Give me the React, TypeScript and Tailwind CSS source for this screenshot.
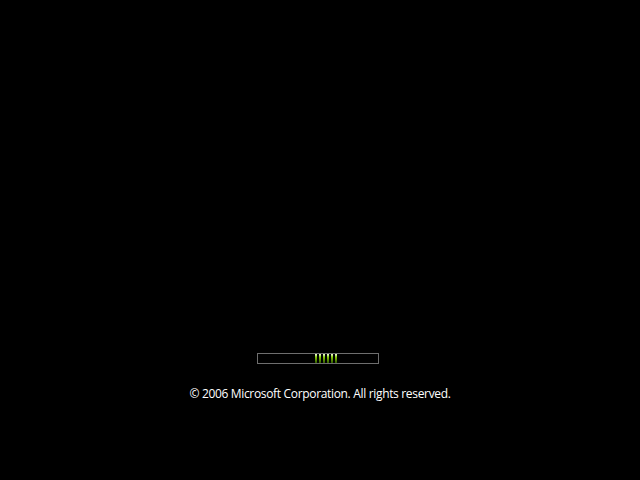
const App = () => {
  const bars = [0, 1, 2, 3, 4, 5];
  return (
    <div className="flex h-[480px] w-[640px] flex-col items-center bg-black pt-[353px] font-['Open_Sans',sans-serif]">
      <div className="ml-[-4px] flex h-[11px] w-[122px] items-start border border-[#6e6e6e] pl-[57px]">
        <div className="flex gap-[2px]">
          {bars.map((b) => (
            <div
              key={b}
              className="h-[9px] w-[2px] bg-gradient-to-b from-[#f4ffd0] via-[#8fd20a] via-30% to-[#2f5a00]"
            />
          ))}
        </div>
      </div>
      <p className="mt-[22px] text-[12px] leading-[16px] tracking-[-0.33px] text-white">
        © 2006 Microsoft Corporation. All rights reserved.
      </p>
    </div>
  );
};

export default App;
